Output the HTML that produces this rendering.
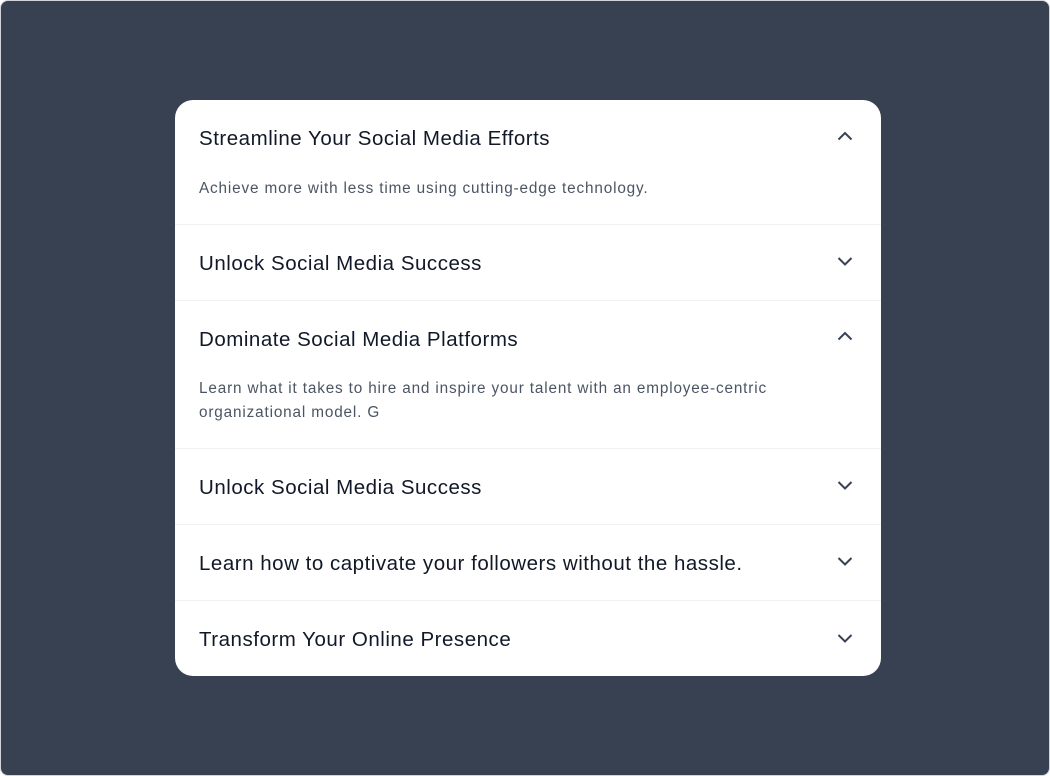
<!DOCTYPE html>
<html><head><style>
html,body{margin:0;padding:0;width:1050px;height:776px;background:#fff;overflow:hidden}
.frame{position:absolute;left:0;top:0;width:1048px;height:774px;background:#374151;border:1px solid #d1d5db;border-radius:8px}
.card{position:absolute;left:175px;top:100px;width:706px;height:576px;background:#fff;border-radius:18px;overflow:hidden;font-family:"Liberation Sans",sans-serif}
.item{border-bottom:1px solid #f0f1f3}
.item:last-child{border-bottom:none}
.item:last-child .hd{height:76px}
.hd{height:75px;display:flex;align-items:center;justify-content:space-between;padding:0 24px;box-sizing:border-box}
.item:first-child .hd{height:76px}
.t{font-size:20.5px;color:#111827;letter-spacing:0.52px;margin-top:2px}
.b{padding:1px 24px 23px;font-size:15.3px;line-height:24px;color:#4b5563;letter-spacing:0.85px}
svg{margin-right:2px;margin-top:-3px}
</style></head><body>
<div class="frame"></div>
<div class="card">
<div class="item"><div class="hd"><span class="t">Streamline Your Social Media Efforts</span><svg width="20" height="20" viewBox="0 0 20 20"><path d="M3.5 12.5 10 6l6.5 6.5" fill="none" stroke="#374151" stroke-width="2"/></svg></div><div class="b">Achieve more with less time using cutting-edge technology.</div></div>
<div class="item"><div class="hd"><span class="t">Unlock Social Media Success</span><svg width="20" height="20" viewBox="0 0 20 20"><path d="M3.5 7 10 13.5 16.5 7" fill="none" stroke="#374151" stroke-width="2"/></svg></div></div>
<div class="item"><div class="hd"><span class="t">Dominate Social Media Platforms</span><svg width="20" height="20" viewBox="0 0 20 20"><path d="M3.5 12.5 10 6l6.5 6.5" fill="none" stroke="#374151" stroke-width="2"/></svg></div><div class="b">Learn what it takes to hire and inspire your talent with an employee-centric<br>organizational model. G</div></div>
<div class="item"><div class="hd"><span class="t">Unlock Social Media Success</span><svg width="20" height="20" viewBox="0 0 20 20"><path d="M3.5 7 10 13.5 16.5 7" fill="none" stroke="#374151" stroke-width="2"/></svg></div></div>
<div class="item"><div class="hd"><span class="t">Learn how to captivate your followers without the hassle.</span><svg width="20" height="20" viewBox="0 0 20 20"><path d="M3.5 7 10 13.5 16.5 7" fill="none" stroke="#374151" stroke-width="2"/></svg></div></div>
<div class="item"><div class="hd"><span class="t">Transform Your Online Presence</span><svg width="20" height="20" viewBox="0 0 20 20"><path d="M3.5 7 10 13.5 16.5 7" fill="none" stroke="#374151" stroke-width="2"/></svg></div></div>
</div>
</body></html>
